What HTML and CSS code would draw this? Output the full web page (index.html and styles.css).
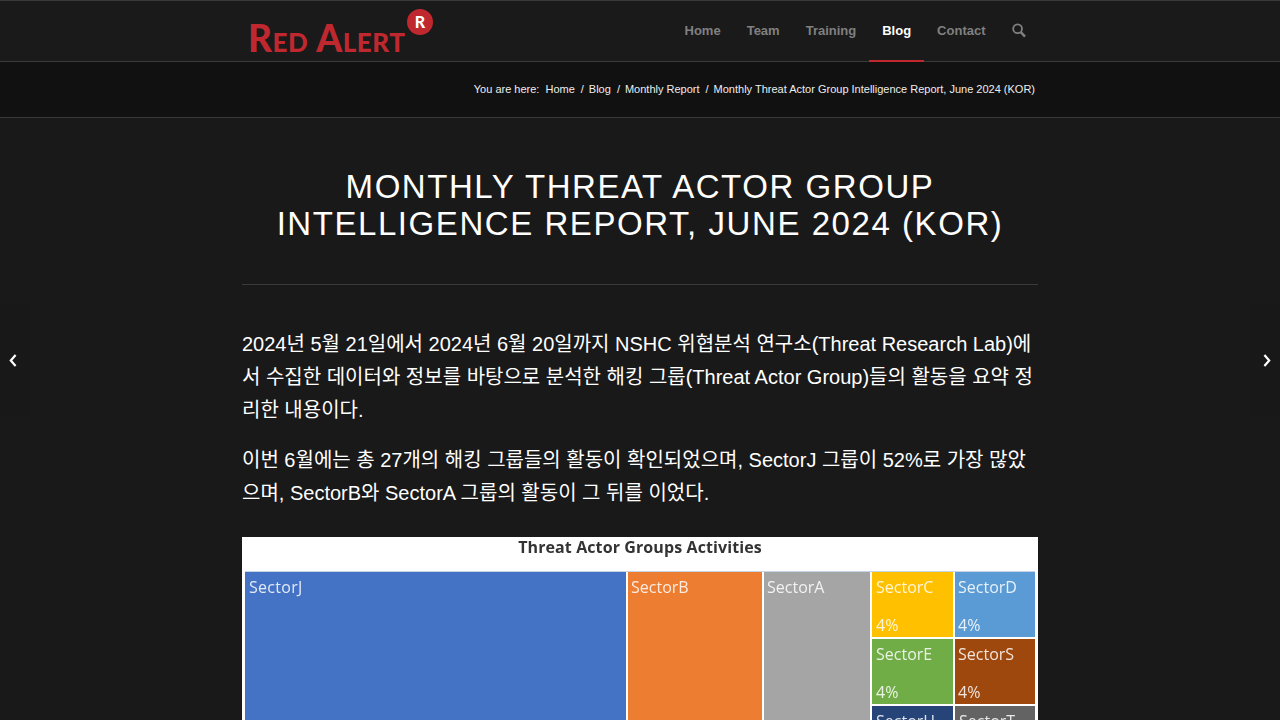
FILE: index.html
```html
<!DOCTYPE html>
<html>
<head>
  <title>Monthly Threat Actor Group Intelligence Report, June 2024 (KOR)</title>
  <link rel="stylesheet" href="styles.css">
</head>
<body>
  <header class="top-bar">
    <div class="inner top-inner">
      <a class="logo" href="#">
        <span class="logo-text">Red Alert</span>
        <span class="logo-badge">R</span>
      </a>
      <nav class="main-nav">
        <a href="#">Home</a>
        <a href="#">Team</a>
        <a href="#">Training</a>
        <a href="#" class="current">Blog</a>
        <a href="#">Contact</a>
        <a href="#" class="search" aria-label="Search">
          <svg width="14" height="15" viewBox="0 0 14 15">
            <circle cx="5.6" cy="5.8" r="4.4" fill="none" stroke="currentColor" stroke-width="1.8"/>
            <path d="M8.8 9.2 L13 13.6" stroke="currentColor" stroke-width="2.4" fill="none"/>
          </svg>
        </a>
      </nav>
    </div>
  </header>

  <div class="title-bar">
    <div class="inner breadcrumb">
      <span class="trail-before">You are here:</span>
      <a href="#">Home</a><span class="sep">/</span>
      <a href="#">Blog</a><span class="sep">/</span>
      <a href="#">Monthly Report</a><span class="sep">/</span>
      <span>Monthly Threat Actor Group Intelligence Report, June 2024 (KOR)</span>
    </div>
  </div>

  <a class="post-nav prev" href="#">
    <svg width="8" height="13" viewBox="0 0 8 13"><path d="M6.6 1 L1.8 6.5 L6.6 12" fill="none" stroke="#fff" stroke-width="2.2"/></svg>
  </a>
  <a class="post-nav next" href="#">
    <svg width="8" height="13" viewBox="0 0 8 13"><path d="M1.4 1 L6.2 6.5 L1.4 12" fill="none" stroke="#fff" stroke-width="2.2"/></svg>
  </a>

  <main class="article">
    <h1>Monthly Threat Actor Group Intelligence Report, June 2024 (KOR)</h1>
    <hr class="rule">
    <p>2024년 5월 21일에서 2024년 6월 20일까지 NSHC 위협분석 연구소(Threat Research Lab)에서 수집한 데이터와 정보를 바탕으로 분석한 해킹 그룹(Threat Actor Group)들의 활동을 요약 정리한 내용이다.</p>
    <p>이번 6월에는 총 27개의 해킹 그룹들의 활동이 확인되었으며, SectorJ 그룹이 52%로 가장 많았으며, SectorB와 SectorA 그룹의 활동이 그 뒤를 이었다.</p>

    <figure class="chart">
      <figcaption>Threat Actor Groups Activities</figcaption>
      <div class="treemap">
        <div class="cell sector-j">SectorJ</div>
        <div class="cell sector-b">SectorB</div>
        <div class="cell sector-a">SectorA</div>
        <div class="small-cells">
          <div class="cell sector-c">SectorC<span>4%</span></div>
          <div class="cell sector-d">SectorD<span>4%</span></div>
          <div class="cell sector-e">SectorE<span>4%</span></div>
          <div class="cell sector-s">SectorS<span>4%</span></div>
          <div class="cell sector-h">SectorH<span>4%</span></div>
          <div class="cell sector-t">SectorT<span>4%</span></div>
        </div>
      </div>
    </figure>
  </main>
</body>
</html>
```

FILE: styles.css
```css
html {
  overflow: hidden;
  height: 720px;
}

body {
  font-family: "Liberation Sans", "Noto Sans CJK KR", Arial, sans-serif;
  background-color: #191919;
  color: #fff;
  margin: 0;
  padding: 0;
}

a {
  color: inherit;
  text-decoration: none;
}

.inner {
  width: 796px;
  margin: 0 auto;
}

.top-bar {
  height: 60px;
  background-color: #1a1a1a;
  border-top: 1px solid #3a3a3a;
  border-bottom: 1px solid #3a3a3a;
}

.top-inner {
  display: flex;
  justify-content: space-between;
  height: 60px;
}

.logo {
  display: flex;
  margin-left: 6px;
  position: relative;
  width: 187px;
}

.logo-text {
  font-family: Lato, sans-serif;
  font-variant: small-caps;
  font-weight: 900;
  font-size: 37px;
  line-height: 37px;
  letter-spacing: 0.5px;
  color: #c0282f;
  margin-top: 18px;
  white-space: nowrap;
}

.logo-badge {
  position: absolute;
  left: 159px;
  top: 8px;
  width: 26px;
  height: 26px;
  border-radius: 50%;
  background-color: #c0282f;
  font-family: Lato, sans-serif;
  font-weight: 900;
  font-size: 16px;
  line-height: 26px;
  text-align: center;
}

.main-nav {
  display: flex;
  margin-right: -0.5px;
}

.main-nav a {
  padding: 0 13px;
  line-height: 59px;
  height: 59px;
  font-size: 13px;
  font-weight: 700;
  color: #808080;
  border-bottom: 2px solid transparent;
}

.main-nav a.current {
  color: #fff;
  border-bottom-color: #c0282f;
}

.main-nav .search {
  display: flex;
  align-items: center;
  padding: 0 13px;
}

.title-bar {
  height: 55px;
  background-color: #111;
  border-bottom: 1px solid #3a3a3a;
}

.breadcrumb {
  display: flex;
  justify-content: flex-end;
  align-items: center;
  height: 55px;
  padding-right: 3px;
  padding-bottom: 2px;
  box-sizing: border-box;
  font-size: 11px;
  color: #eee;
  white-space: nowrap;
}

.trail-before {
  margin-right: 6px;
}

.sep {
  margin: 0 5px 0 6px;
}

.post-nav {
  position: absolute;
  top: 305px;
  width: 21px;
  height: 110px;
  display: flex;
  align-items: center;
  background-color: #181818;
}

.post-nav.prev {
  left: 0;
  padding-left: 9px;
}

.post-nav.next {
  right: 0;
  justify-content: flex-end;
  padding-right: 9px;
}

.article {
  width: 796px;
  margin: 0 auto;
}

h1 {
  margin: 0;
  padding-top: 50px;
  font-size: 33px;
  line-height: 37px;
  font-weight: 400;
  letter-spacing: 1.56px;
  text-align: center;
  text-transform: uppercase;
}

.rule {
  border: 0;
  border-top: 1px solid #3a3a3a;
  margin: 42px 0 43px;
}

p {
  margin: 0 0 17px;
  font-size: 20px;
  line-height: 33px;
}

.chart {
  margin: 27px 0 0;
  background-color: #fff;
  height: 460px;
  padding: 0 3px;
  filter: blur(0.35px);
}

.chart figcaption {
  height: 34px;
  line-height: 20px;
  text-align: center;
  font-family: "Open Sans", sans-serif;
  font-weight: 700;
  font-size: 16px;
  letter-spacing: 0.1px;
  color: #333;
}

.treemap {
  display: flex;
  gap: 2px;
  height: 420px;
  background-color: #fff;
  border-top: 1px solid #c8d4e8;
}

.cell {
  font-family: "Open Sans", sans-serif;
  font-size: 16px;
  color: rgba(255, 255, 255, 0.85);
  padding: 4px 0 0 4px;
  box-sizing: border-box;
  display: flex;
  flex-direction: column;
  justify-content: space-between;
}

.cell span {
  padding-bottom: 1px;
}

.sector-j {
  width: 381px;
  background-color: #4472c4;
  letter-spacing: 0.3px;
}

.sector-b {
  width: 134px;
  padding-left: 3px;
  background-color: #ed7d31;
}

.sector-a {
  width: 106px;
  padding-left: 3px;
  background-color: #a5a5a5;
}

.small-cells {
  width: 163px;
  display: grid;
  grid-template-columns: 81px 80px;
  grid-auto-rows: 65px;
  gap: 2px;
}

.sector-c {
  background-color: #ffc000;
}

.sector-d {
  padding-left: 3px;
  background-color: #5b9bd5;
}

.sector-e {
  background-color: #70ad47;
}

.sector-s {
  padding-left: 3px;
  background-color: #9e480e;
}

.sector-h {
  background-color: #264478;
}

.sector-t {
  background-color: #636363;
}
```
